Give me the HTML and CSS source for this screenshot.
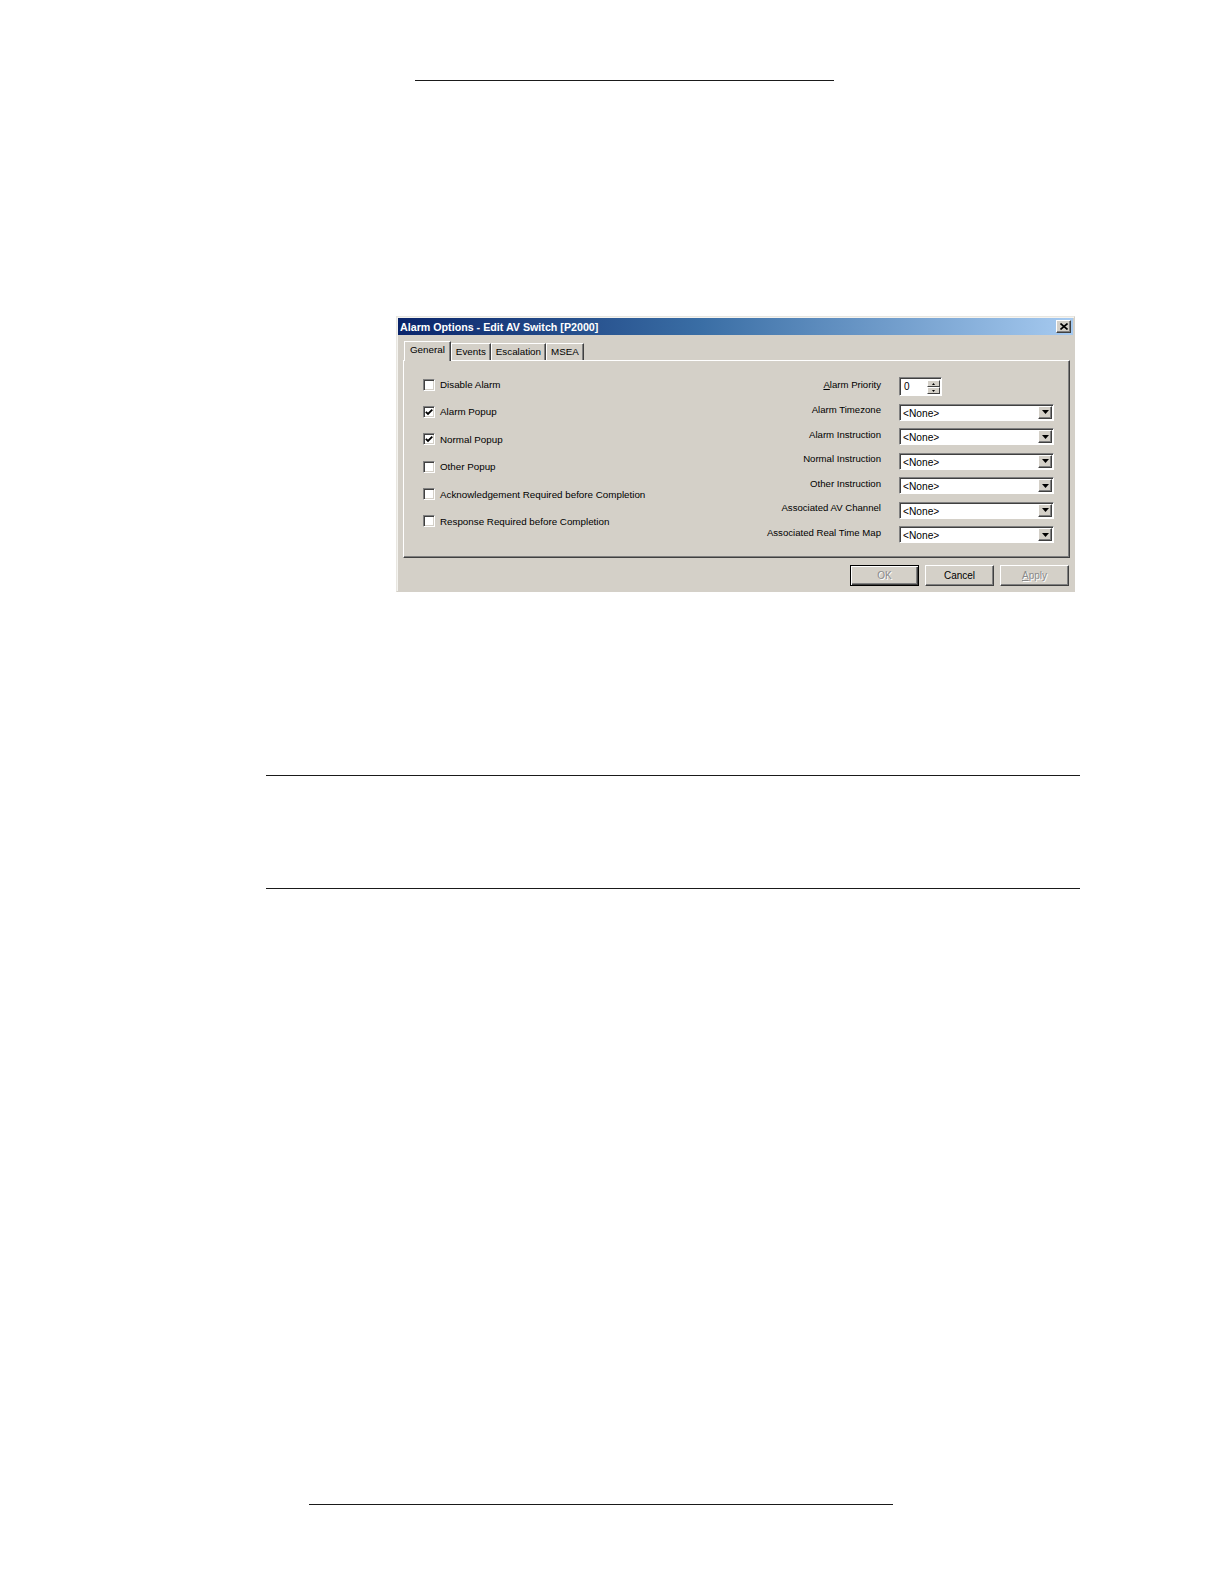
FILE: index.html
```html
<!DOCTYPE html>
<html lang="en">
<head>
<meta charset="utf-8">
<title>Alarm Options - Edit AV Switch [P2000]</title>
<link rel="stylesheet" href="styles.css">
</head>
<body>
<div class="page">
  <div class="rule rule-top"></div>

  <div class="dialog">
    <div class="titlebar">
      <span class="title">Alarm Options - Edit AV Switch [P2000]</span>
      <span class="close-btn">
        <svg width="8" height="7" viewBox="0 0 8 7"><path d="M0.5 0.5 L7.5 6.5 M7.5 0.5 L0.5 6.5" stroke="#000" stroke-width="1.6" fill="none"/></svg>
      </span>
    </div>

    <div class="dialog-body">
      <div class="tabs">
        <div class="tab tab-active">General</div>
        <div class="tab">Events</div>
        <div class="tab">Escalation</div>
        <div class="tab">MSEA</div>
      </div>

      <div class="panel">
        <div class="checks">
          <div class="check-row"><span class="checkbox"></span><span class="check-label">Disable Alarm</span></div>
          <div class="check-row"><span class="checkbox checked"><svg width="8" height="8" viewBox="0 0 8 8"><path d="M0.8 3.8 L3 6 L7.3 1.6" stroke="#000" stroke-width="1.8" fill="none"/></svg></span><span class="check-label">Alarm Popup</span></div>
          <div class="check-row"><span class="checkbox checked"><svg width="8" height="8" viewBox="0 0 8 8"><path d="M0.8 3.8 L3 6 L7.3 1.6" stroke="#000" stroke-width="1.8" fill="none"/></svg></span><span class="check-label">Normal Popup</span></div>
          <div class="check-row"><span class="checkbox"></span><span class="check-label">Other Popup</span></div>
          <div class="check-row"><span class="checkbox"></span><span class="check-label">Acknowledgement Required before Completion</span></div>
          <div class="check-row"><span class="checkbox"></span><span class="check-label">Response Required before Completion</span></div>
        </div>

        <div class="fields">
          <span class="field-label"><u>A</u>larm Priority</span>
          <div class="spinner">
            <span class="spin-value">0</span>
            <span class="spin-buttons">
              <span class="spin-btn"><svg width="3" height="2" viewBox="0 0 3 2"><path d="M1.5 0 L3 2 L0 2 Z" fill="#000"/></svg></span>
              <span class="spin-btn"><svg width="3" height="2" viewBox="0 0 3 2"><path d="M0 0 L3 0 L1.5 2 Z" fill="#000"/></svg></span>
            </span>
          </div>

          <span class="field-label">Alarm Timezone</span>
          <div class="combo"><span class="combo-text">&lt;None&gt;</span><span class="combo-btn"><svg width="7" height="4" viewBox="0 0 7 4"><path d="M0 0 L7 0 L3.5 4 Z" fill="#000"/></svg></span></div>

          <span class="field-label">Alarm Instruction</span>
          <div class="combo"><span class="combo-text">&lt;None&gt;</span><span class="combo-btn"><svg width="7" height="4" viewBox="0 0 7 4"><path d="M0 0 L7 0 L3.5 4 Z" fill="#000"/></svg></span></div>

          <span class="field-label">Normal Instruction</span>
          <div class="combo"><span class="combo-text">&lt;None&gt;</span><span class="combo-btn"><svg width="7" height="4" viewBox="0 0 7 4"><path d="M0 0 L7 0 L3.5 4 Z" fill="#000"/></svg></span></div>

          <span class="field-label">Other Instruction</span>
          <div class="combo"><span class="combo-text">&lt;None&gt;</span><span class="combo-btn"><svg width="7" height="4" viewBox="0 0 7 4"><path d="M0 0 L7 0 L3.5 4 Z" fill="#000"/></svg></span></div>

          <span class="field-label">Associated AV Channel</span>
          <div class="combo"><span class="combo-text">&lt;None&gt;</span><span class="combo-btn"><svg width="7" height="4" viewBox="0 0 7 4"><path d="M0 0 L7 0 L3.5 4 Z" fill="#000"/></svg></span></div>

          <span class="field-label">Associated Real Time Map</span>
          <div class="combo"><span class="combo-text">&lt;None&gt;</span><span class="combo-btn"><svg width="7" height="4" viewBox="0 0 7 4"><path d="M0 0 L7 0 L3.5 4 Z" fill="#000"/></svg></span></div>
        </div>
      </div>

      <div class="buttons">
        <button class="btn btn-default" disabled>OK</button>
        <button class="btn">Cancel</button>
        <button class="btn" disabled><u>A</u>pply</button>
      </div>
    </div>
  </div>

  <div class="rule rule-mid rule-mid1"></div>
  <div class="rule rule-mid rule-mid2"></div>
  <div class="rule rule-foot"></div>
</div>
</body>
</html>
```

FILE: styles.css
```css
html, body {
  margin: 0;
  padding: 0;
  background: #ffffff;
}

.page {
  width: 1224px;
  min-height: 1584px;
  display: flow-root;
  font-family: "Liberation Sans", Arial, sans-serif;
  color: #000;
}

.rule {
  height: 1px;
  background: #1a1a1a;
}

.rule-top {
  margin: 80px 0 0 415px;
  width: 419px;
}

.rule-mid {
  margin-left: 266px;
  width: 814px;
}

.rule-mid1 { margin-top: 183px; }
.rule-mid2 { margin-top: 112px; }

.rule-foot {
  margin: 615px 0 0 309px;
  width: 584px;
}

/* ---------- dialog ---------- */
.dialog {
  box-sizing: border-box;
  margin: 235px 0 0 396px;
  width: 679px;
  height: 276px;
  background: #d4d0c8;
  border: 1px solid;
  border-color: #e8e6e0 #d4d0c8 #d4d0c8 #e8e6e0;
  box-shadow: inset 1px 1px #f4f3ef;
  padding: 1px;
  display: flex;
  flex-direction: column;
}

.titlebar {
  height: 17px;
  background: linear-gradient(to right, #0a246a 0%, #3a6ea5 45%, #a6caf0 100%);
  display: flex;
  align-items: center;
  justify-content: space-between;
  padding: 0 2px;
}

.title {
  color: #fff;
  font-weight: bold;
  font-size: 10.7px;
  white-space: nowrap;
}

.close-btn {
  box-sizing: border-box;
  width: 15px;
  height: 13px;
  background: #d4d0c8;
  border: 1px solid;
  border-color: #fff #404040 #404040 #fff;
  box-shadow: inset -1px -1px #808080;
  display: flex;
  align-items: center;
  justify-content: center;
}

.close-btn svg { display: block; }

.dialog-body {
  flex: 1;
  display: flex;
  flex-direction: column;
  padding: 7px 3px 0 5px;
}

/* ---------- tabs ---------- */
.tabs {
  display: flex;
  align-items: flex-end;
  height: 18px;
  padding-left: 1px;
}

.tab {
  box-sizing: border-box;
  height: 17px;
  padding: 0 4px;
  font-size: 9.8px;
  line-height: 16px;
  border: 1px solid;
  border-bottom: none;
  border-color: #fff #404040 transparent #fff;
  box-shadow: inset -1px 0 #808080;
  background: #d4d0c8;
  white-space: nowrap;
}

.tab-active {
  height: 20px;
  margin-bottom: -1px;
  padding: 0 5px;
  line-height: 16px;
  position: relative;
  z-index: 1;
}

/* ---------- panel ---------- */
.panel {
  box-sizing: border-box;
  width: 667px;
  height: 198px;
  border: 1px solid;
  border-color: #fff #404040 #404040 #fff;
  box-shadow: inset -1px -1px #808080;
  display: flex;
  justify-content: space-between;
  padding: 0 15px 0 19px;
}

.checks {
  display: flex;
  flex-direction: column;
  gap: 15.4px;
  padding-top: 17.5px;
}

.check-row {
  display: flex;
  align-items: center;
  height: 12px;
  gap: 5px;
}

.checkbox {
  box-sizing: border-box;
  width: 12px;
  height: 12px;
  background: #fff;
  border: 1px solid;
  border-color: #808080 #fff #fff #808080;
  box-shadow: inset 1px 1px #404040, inset -1px -1px #d4d0c8;
  display: flex;
  align-items: center;
  justify-content: center;
  flex: none;
}

.checkbox svg { display: block; }

.check-label {
  font-size: 9.8px;
  white-space: nowrap;
}

/* ---------- right fields ---------- */
.fields {
  display: grid;
  grid-template-columns: auto 155px;
  grid-template-rows: 19px repeat(6, 17px);
  column-gap: 18px;
  row-gap: 7.5px;
  padding-top: 16px;
  align-content: start;
}

.field-label {
  font-size: 9.6px;
  text-align: right;
  align-self: center;
  padding-bottom: 5px;
  white-space: nowrap;
}

.spinner {
  box-sizing: border-box;
  width: 43px;
  height: 19px;
  background: #fff;
  border: 1px solid;
  border-color: #808080 #fff #fff #808080;
  box-shadow: inset 1px 1px #404040;
  display: flex;
  justify-content: space-between;
  padding: 2px 1px 1px 4px;
}

.spin-value {
  font-size: 10px;
  line-height: 13px;
}

.spin-buttons {
  display: flex;
  flex-direction: column;
  width: 13px;
}

.spin-btn {
  box-sizing: border-box;
  flex: 1;
  background: #d4d0c8;
  border: 1px solid;
  border-color: #fff #404040 #404040 #fff;
  display: flex;
  align-items: center;
  justify-content: center;
}

.spin-btn svg { display: block; }

.combo {
  box-sizing: border-box;
  height: 17px;
  background: #fff;
  border: 1px solid;
  border-color: #808080 #fff #fff #808080;
  box-shadow: inset 1px 1px #404040;
  display: flex;
  align-items: stretch;
  justify-content: space-between;
  padding: 1px 1px 1px 2px;
}

.combo-text {
  font-size: 10.2px;
  line-height: 14px;
  padding-left: 1px;
  padding-top: 1px;
}

.combo-btn {
  box-sizing: border-box;
  width: 14px;
  background: #d4d0c8;
  border: 1px solid;
  border-color: #fff #404040 #404040 #fff;
  box-shadow: inset -1px -1px #808080;
  display: flex;
  align-items: center;
  justify-content: center;
}

.combo-btn svg { display: block; }

/* ---------- buttons ---------- */
.buttons {
  display: flex;
  justify-content: flex-end;
  gap: 6px;
  margin-top: 7px;
  padding-right: 1px;
}

.btn {
  box-sizing: border-box;
  width: 69px;
  height: 21px;
  margin: 0;
  padding: 0;
  font-family: "Liberation Sans", Arial, sans-serif;
  font-size: 10px;
  color: #000;
  background: #d4d0c8;
  border: 1px solid;
  border-color: #fff #404040 #404040 #fff;
  box-shadow: inset -1px -1px #808080;
  border-radius: 0;
}

.btn:disabled {
  color: #8a8a8a;
  text-shadow: 1px 1px #fff;
}

.btn-default {
  border: 1px solid #000;
  box-shadow: inset 1px 1px #fff, inset -1px -1px #404040, inset -2px -2px #808080;
}
```
